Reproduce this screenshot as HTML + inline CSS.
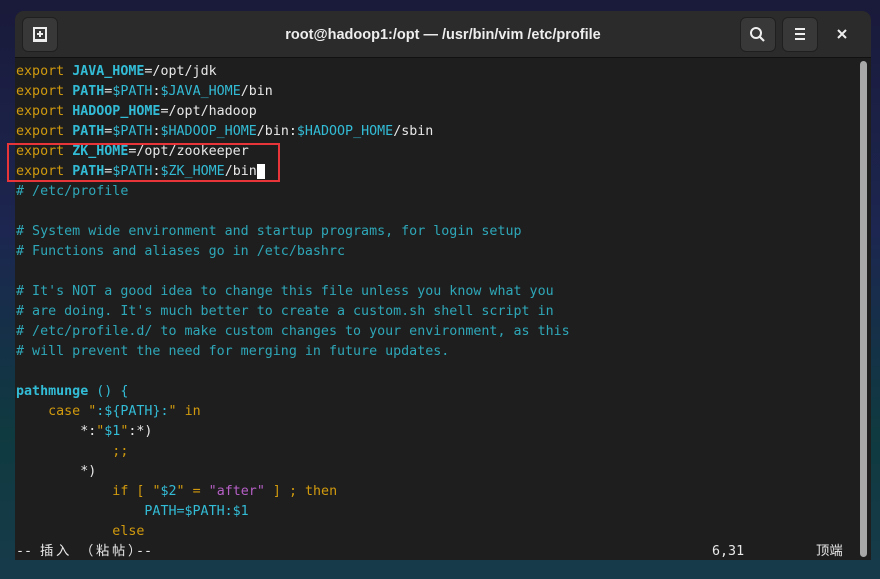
<!DOCTYPE html>
<html><head><meta charset="utf-8"><style>
html,body{margin:0;padding:0}
body{width:880px;height:579px;overflow:hidden;position:relative;background:linear-gradient(180deg,#1a1a3a 0%,#1c2650 40%,#0f3a40 75%,#173a4a 100%);}
.win{position:absolute;left:15px;top:11px;width:856px;height:549px;background:#1e1e1e;border-radius:9px 9px 0 0;overflow:hidden}
.hdr{position:absolute;left:0;top:0;width:856px;height:46px;background:#2b2b2b;border-bottom:1px solid #111}
.btn{position:absolute;top:6px;width:34px;height:33px;background:#383838;border-radius:6px;border:1px solid #1f1f1f}
.title{position:absolute;left:0;right:0;top:16px;text-align:center;color:#eee;font:bold 14.5px "Liberation Sans",sans-serif}
.term{position:absolute;left:1px;top:51px;font:13.33px/20px "DejaVu Sans Mono","Noto Sans CJK SC",monospace;color:#e8e8e8;white-space:pre}
.y{color:#d19a0e}.c{color:#33bcd6}.b{color:#33bcd6;font-weight:bold}.m{color:#2ea7b8}.p{color:#b55fc5}.w{color:#e8e8e8;font-weight:bold}
.st{position:absolute;top:531px;font:13.33px/20px "DejaVu Sans Mono","Noto Sans CJK SC",monospace;color:#e8e8e8;white-space:pre}
.sb{position:absolute;left:845px;top:50px;width:7px;height:496px;background:#a8a8a8;border-radius:4px}
</style></head><body>
<div class="win">
<div class="hdr">
<div class="btn" style="left:7px"><svg width="34" height="33"><rect x="11" y="10" width="12" height="12" fill="none" stroke="#eee" stroke-width="2"/><path d="M17 13v6M14 16h6M10 23h14" stroke="#eee" stroke-width="2"/></svg></div>
<div class="title">root@hadoop1:/opt — /usr/bin/vim /etc/profile</div>
<div class="btn" style="left:725px"><svg width="34" height="33"><circle cx="15" cy="15" r="5" fill="none" stroke="#eee" stroke-width="2"/><path d="M19 19l4 4" stroke="#eee" stroke-width="2.2"/></svg></div>
<div class="btn" style="left:767px"><svg width="34" height="33"><path d="M12 11h10M12 16h10M12 21h10" stroke="#eee" stroke-width="2"/></svg></div>
<svg style="position:absolute;left:820px;top:16px" width="14" height="14"><path d="M3 3l8 8M11 3l-8 8" stroke="#eee" stroke-width="2"/></svg>
</div>
<div class="term"><span class="y">export</span> <span class="b">JAVA_HOME</span>=/opt/jdk
<span class="y">export</span> <span class="b">PATH</span>=<span class="c">$PATH</span>:<span class="c">$JAVA_HOME</span>/bin
<span class="y">export</span> <span class="b">HADOOP_HOME</span>=/opt/hadoop
<span class="y">export</span> <span class="b">PATH</span>=<span class="c">$PATH</span>:<span class="c">$HADOOP_HOME</span>/bin:<span class="c">$HADOOP_HOME</span>/sbin
<span class="y">export</span> <span class="b">ZK_HOME</span>=/opt/zookeeper
<span class="y">export</span> <span class="b">PATH</span>=<span class="c">$PATH</span>:<span class="c">$ZK_HOME</span>/bin<span style="background:#fff"> </span>
<span class="m"># /etc/profile</span>

<span class="m"># System wide environment and startup programs, for login setup</span>
<span class="m"># Functions and aliases go in /etc/bashrc</span>

<span class="m"># It's NOT a good idea to change this file unless you know what you</span>
<span class="m"># are doing. It's much better to create a custom.sh shell script in</span>
<span class="m"># /etc/profile.d/ to make custom changes to your environment, as this</span>
<span class="m"># will prevent the need for merging in future updates.</span>

<span class="b">pathmunge</span> <span class="c">()</span> <span class="c">{</span>
    <span class="y">case</span> <span class="y">"</span><span class="c">:${PATH}:</span><span class="y">"</span> <span class="y">in</span>
        *:<span class="y">"</span><span class="c">$1</span><span class="y">"</span>:*)
            <span class="y">;;</span>
        *)
            <span class="y">if</span> <span class="y">[</span> <span class="y">"</span><span class="c">$2</span><span class="y">"</span> <span class="y">=</span> <span class="p">"after"</span> <span class="y">]</span> <span class="y">;</span> <span class="y">then</span>
                <span class="c">PATH=$PATH:$1</span>
            <span class="y">else</span></div>
<div class="st w" style="left:1px">--</div>
<div class="st w" style="left:25px">插</div>
<div class="st w" style="left:41px">入</div>
<div class="st w" style="left:65px">（</div>
<div class="st w" style="left:81px">粘</div>
<div class="st w" style="left:97px">帖</div>
<div class="st w" style="left:113px">）</div>
<div class="st w" style="left:121px">--</div>
<div class="st" style="left:697px">6,31</div>
<div class="st" style="left:801px">顶端</div>
<div class="sb"></div>
</div>
<div style="position:absolute;left:7px;top:143px;width:269px;height:35px;border:2px solid #e8353a"></div>
</body></html>
